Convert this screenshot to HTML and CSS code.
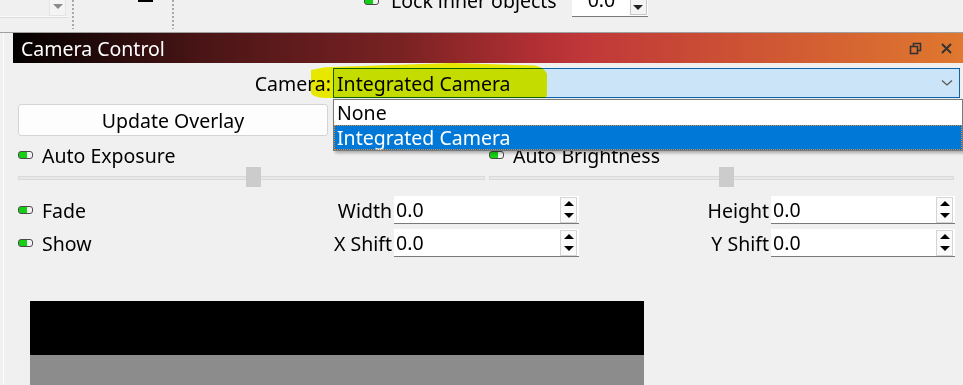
FILE: index.html
```html
<!DOCTYPE html>
<html lang="en">
<head>
    <meta charset="UTF-8">
    <title>Camera Control</title>
    <link rel="stylesheet" href="styles.css">
</head>
<body>
    <!-- toolbar strip above the dock, cut off at the top -->
    <div class="toolbar">
        <div class="tb-combo">
            <span class="tb-arrow"></span>
        </div>
        <div class="grip"></div>
        <div class="tb-block"><span class="tb-black"></span></div>
        <div class="grip"></div>
        <div class="tb-lock">
            <span class="toggle toggle-cut"></span>
            <span class="tb-label">Lock inner objects</span>
            <div class="tb-spin">
                <span class="tb-value">0.0</span>
                <span class="tb-spin-btn"><span class="tri-down small"></span></span>
            </div>
        </div>
    </div>

    <div class="main">
        <div class="gutter"></div>
        <div class="dock">
            <div class="titlebar">
                <span class="title">Camera Control</span>
                <div class="title-icons">
                    <svg width="13" height="13" viewBox="0 0 13 13">
                        <rect x="1.5" y="4.5" width="7" height="7" fill="none" stroke="#333" stroke-width="1.6"/>
                        <path d="M4.5 4.5 V1.5 H11.5 V8.5 H8.5" fill="none" stroke="#333" stroke-width="1.6"/>
                    </svg>
                    <svg width="13" height="13" viewBox="0 0 13 13">
                        <path d="M2 2 L11 11 M11 2 L2 11" stroke="#333" stroke-width="2"/>
                    </svg>
                </div>
            </div>

            <div class="content">
                <div class="camera-row">
                    <label class="camera-label">Camera:</label>
                    <div class="combo">
                        <span>Integrated Camera</span>
                        <svg width="12" height="8" viewBox="0 0 12 8">
                            <path d="M1 1.5 L6 6 L11 1.5" fill="none" stroke="#555" stroke-width="1.2"/>
                        </svg>
                    </div>
                    <div class="highlight"></div>
                    <div class="popup">
                        <div class="popup-item">None</div>
                        <div class="popup-item selected">Integrated Camera</div>
                    </div>
                </div>

                <div class="button-row">
                    <button class="btn">Update Overlay</button>
                </div>

                <div class="two-col">
                    <div class="check"><span class="toggle"></span>Auto Exposure</div>
                    <div class="check"><span class="toggle"></span>Auto Brightness</div>
                </div>

                <div class="two-col sliders">
                    <div class="slider"><span class="handle" style="left: 227px"></span></div>
                    <div class="slider"><span class="handle" style="left: 229px"></span></div>
                </div>

                <div class="grid">
                    <div class="check"><span class="toggle"></span>Fade</div>
                    <div class="field-label">Width</div>
                    <div class="spin"><span>0.0</span><span class="spin-btns"><span class="tri-up"></span><span class="tri-down"></span></span></div>
                    <div class="field-label">Height</div>
                    <div class="spin"><span>0.0</span><span class="spin-btns"><span class="tri-up"></span><span class="tri-down"></span></span></div>

                    <div class="check"><span class="toggle"></span>Show</div>
                    <div class="field-label">X Shift</div>
                    <div class="spin"><span>0.0</span><span class="spin-btns"><span class="tri-up"></span><span class="tri-down"></span></span></div>
                    <div class="field-label">Y Shift</div>
                    <div class="spin"><span>0.0</span><span class="spin-btns"><span class="tri-up"></span><span class="tri-down"></span></span></div>
                </div>

                <div class="preview">
                    <div class="preview-black"></div>
                    <div class="preview-gray"></div>
                </div>
            </div>
        </div>
    </div>
</body>
</html>
```

FILE: styles.css
```css
body {
    margin: 0;
    width: 963px;
    height: 385px;
    overflow: hidden;
    font-family: 'Noto Sans', sans-serif;
    font-size: 19.5px;
    color: #000;
    background-color: #f0f0f0;
}
.toolbar {
    display: flex;
    height: 32px;
    border-bottom: 1px solid #a0a0a0;
    overflow: hidden;
}
.tb-combo {
    width: 68px;
    height: 16px;
    border-bottom: 1px solid #fafafa;
    box-shadow: 0 1px 0 #dcdcdc;
    position: relative;
}
.tb-arrow {
    position: absolute;
    left: 49px;
    top: 0;
    width: 15px;
    height: 15px;
    border: 1px solid #e4e4e4;
    border-top: none;
    background: #f4f4f4;
}
.tb-arrow::after {
    content: "";
    position: absolute;
    left: 3px;
    top: 4px;
    border-left: 5px solid transparent;
    border-right: 5px solid transparent;
    border-top: 5px solid #8a8a8a;
}
.grip {
    width: 2px;
    margin: 0 3px 0 4px;
    height: 29px;
    background: repeating-linear-gradient(to bottom, #a8a8a8 0 2px, transparent 2px 4px);
}
.tb-block {
    width: 91px;
    position: relative;
}
.tb-black {
    position: absolute;
    left: 61px;
    top: 0;
    width: 15px;
    height: 2px;
    background: #000;
}
.tb-lock {
    flex: 1;
    display: flex;
    align-items: flex-start;
    padding-left: 187px;
}
.toggle-cut {
    margin-top: -3px;
}
.tb-label {
    margin-top: -11px;
    margin-left: 3px;
    line-height: 24px;
}
.tb-spin {
    margin-left: 15px;
    width: 76px;
    height: 16px;
    background: #fff;
    border-bottom: 1px solid #7a7a7a;
    display: flex;
    justify-content: space-between;
    align-items: flex-start;
    overflow: hidden;
}
.tb-value {
    padding-left: 16px;
    margin-top: -12px;
    line-height: 24px;
}
.tb-spin-btn {
    width: 15px;
    height: 14px;
    margin-right: 1px;
    border: 1px solid #c8c8c8;
    border-top: none;
    background: #f4f4f4;
    display: flex;
    align-items: center;
    justify-content: center;
}
.main {
    display: flex;
}
.gutter {
    width: 9px;
    margin-left: 3px;
    border-left: 1px solid #fbfbfb;
    height: 352px;
}
.dock {
    flex: 1;
}
.titlebar {
    height: 30px;
    display: flex;
    align-items: center;
    justify-content: space-between;
    background: linear-gradient(to right, #030000 0%, #4a1516 20%, #7a2223 41%, #b12f33 55%, #c03739 60%, #c94b35 72%, #e0782f 100%);
}
.title {
    color: #fff;
    padding-left: 8px;
    font-size: 19.5px;
}
.title-icons {
    display: flex;
    gap: 18px;
    padding-right: 10px;
    padding-top: 1px;
}
.content {
    padding: 5px 5px 0 5px;
}
.camera-row {
    position: relative;
    display: flex;
    align-items: center;
    height: 30px;
}
.camera-label {
    width: 313px;
    text-align: right;
    padding-right: 2px;
}
.combo {
    flex: 1;
    height: 28px;
    margin-right: -2px;
    border: 1px solid #0a64ad;
    background-color: #cce4f7;
    display: flex;
    align-items: center;
    justify-content: space-between;
    padding: 0 6px 0 3px;
}
.highlight {
    position: absolute;
    left: 293px;
    top: -5px;
    width: 236px;
    height: 35px;
    background: #f6f600;
    mix-blend-mode: multiply;
    border-radius: 2px 30px 4px 14px / 2px 12px 4px 6px;
    clip-path: polygon(0 20%, 6% 12%, 60% 0, 100% 8%, 100% 100%, 0 100%);
}
.popup {
    position: absolute;
    left: 315px;
    top: 31px;
    right: -5px;
    z-index: 5;
    background: #fff;
    border: 1px solid #7a7a7a;
    box-shadow: 2px 2px 3px rgba(0, 0, 0, 0.3);
}
.popup-item {
    height: 25px;
    line-height: 25px;
    padding-left: 3px;
}
.popup-item.selected {
    background-color: #0078d7;
    color: #fff;
    outline: 1px dotted #e08a30;
    outline-offset: -1px;
}
.button-row {
    padding-top: 6px;
}
.btn {
    width: 310px;
    height: 32px;
    font-family: inherit;
    font-size: 19.5px;
    background: #fdfdfd;
    border: 1px solid #d4d4d4;
    border-radius: 3px;
    padding: 0;
}
.two-col {
    display: grid;
    grid-template-columns: 471px 1fr;
}
.check {
    display: flex;
    align-items: center;
    height: 22px;
}
.two-col .check {
    margin-top: 8px;
}
.toggle {
    display: inline-block;
    width: 13px;
    height: 6px;
    border: 1px solid #4a4a4a;
    border-radius: 3px;
    background: linear-gradient(to right, #14d014 60%, #f4f4f4 60%);
    margin-right: 9px;
}
.sliders {
    height: 24px;
    align-items: center;
}
.slider {
    position: relative;
    height: 2px;
    margin-right: 4px;
    border: 1px solid #dadada;
    background: #e8e8e8;
}
.handle {
    position: absolute;
    top: -10px;
    width: 15px;
    height: 20px;
    background: #cccccc;
}
.grid {
    display: grid;
    grid-template-columns: 300px 76px 185px 192px 184px;
    grid-auto-rows: 28px;
    row-gap: 5px;
    margin-top: 6px;
    align-items: center;
}
.field-label {
    text-align: right;
    padding-right: 2px;
}
.spin {
    height: 27px;
    background: #fff;
    border-bottom: 1px solid #7a7a7a;
    display: flex;
    align-items: center;
    justify-content: space-between;
    padding-left: 2px;
}
.spin-btns {
    display: flex;
    flex-direction: column;
    width: 15px;
    height: 24px;
    margin-right: 2px;
    border: 1px solid #d4d4d4;
    background: #fafafa;
    align-items: center;
    justify-content: space-around;
}
.tri-up {
    border-left: 5px solid transparent;
    border-right: 5px solid transparent;
    border-bottom: 5px solid #000;
}
.tri-down {
    border-left: 5px solid transparent;
    border-right: 5px solid transparent;
    border-top: 5px solid #000;
}
.tri-down.small {
    border-top: 5px solid #222;
}
.preview {
    margin: 44px 0 0 12px;
    width: 614px;
}
.preview-black {
    height: 54px;
    background: #000;
}
.preview-gray {
    height: 40px;
    background: #8c8c8c;
}
```
